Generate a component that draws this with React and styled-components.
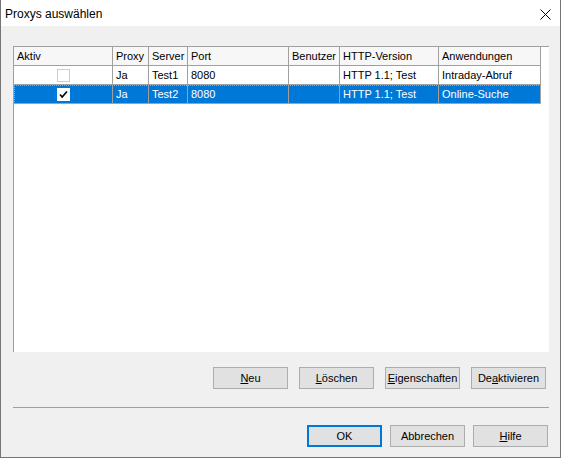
import React from "react";
import styled, { createGlobalStyle } from "styled-components";

const GlobalStyle = createGlobalStyle`
  html, body {
    margin: 0;
    padding: 0;
    background: #f0f0f0;
  }
  * {
    box-sizing: border-box;
  }
`;

const columns = [
  { key: "aktiv", label: "Aktiv", width: 99 },
  { key: "proxy", label: "Proxy", width: 36 },
  { key: "server", label: "Server", width: 39 },
  { key: "port", label: "Port", width: 101 },
  { key: "user", label: "Benutzer", width: 51 },
  { key: "http", label: "HTTP-Version", width: 99 },
  { key: "apps", label: "Anwendungen", width: 102 },
];

const rows = [
  { id: 1, aktiv: false, proxy: "Ja", server: "Test1", port: "8080", user: "", http: "HTTP 1.1; Test", apps: "Intraday-Abruf" },
  { id: 2, aktiv: true, proxy: "Ja", server: "Test2", port: "8080", user: "", http: "HTTP 1.1; Test", apps: "Online-Suche", selected: true },
];

const gridCols = columns.map((c) => `${c.width}px`).join(" ");

function App() {
  return (
    <>
      <GlobalStyle />
      <StWindow>
        <StTitleBar>
          <StTitle>Proxys auswählen</StTitle>
          <StClose>
            <svg width="11" height="11" viewBox="0 0 11 11">
              <path d="M0.5 0.5 L10.5 10.5 M10.5 0.5 L0.5 10.5" stroke="#000" strokeWidth="1" fill="none" />
            </svg>
          </StClose>
        </StTitleBar>

        <StBody>
          <StList>
            <StHeader>
              {columns.map((c) => (
                <StHeadCell key={c.key}>{c.label}</StHeadCell>
              ))}
            </StHeader>
            {rows.map((r) => (
              <StRow key={r.id} $selected={r.selected}>
                {columns.map((c) =>
                  c.key === "aktiv" ? (
                    <StCheckCell key={c.key}>
                      <StCheck $checked={r.aktiv}>
                        {r.aktiv && (
                          <svg width="9" height="9" viewBox="0 0 9 9">
                            <path d="M1 4.5 L3.2 7 L8 1.5" stroke="#000" strokeWidth="1.6" fill="none" />
                          </svg>
                        )}
                      </StCheck>
                    </StCheckCell>
                  ) : (
                    <StCell key={c.key}>{r[c.key]}</StCell>
                  )
                )}
              </StRow>
            ))}
          </StList>

          <StActionRow>
            <StButton><u>N</u>eu</StButton>
            <StButton><u>L</u>öschen</StButton>
            <StButton><u>E</u>igenschaften</StButton>
            <StButton>De<u>a</u>ktivieren</StButton>
          </StActionRow>

          <StSeparator />

          <StFooter>
            <StButton $default>OK</StButton>
            <StButton>Abbrechen</StButton>
            <StButton><u>H</u>ilfe</StButton>
          </StFooter>
        </StBody>
      </StWindow>
    </>
  );
}

export default App;

const StWindow = styled.div`
  width: 561px;
  height: 458px;
  display: flex;
  flex-direction: column;
  background: #f0f0f0;
  border: 1px solid #747474;
  border-top: none;
  font-family: "Liberation Sans", Arial, sans-serif;
  color: #000;
`;

const StTitleBar = styled.div`
  height: 26px;
  background: #fff;
  display: flex;
  align-items: center;
  justify-content: space-between;
  padding: 0 9px 0 4px;
`;

const StTitle = styled.div`
  font-size: 12px;
  padding-top: 1px;
`;

const StClose = styled.div`
  width: 11px;
  height: 11px;
  display: flex;
  margin-top: 2px;
`;

const StBody = styled.div`
  flex: 1;
  display: flex;
  flex-direction: column;
  padding: 20px 11px 0 12px;
`;

const StList = styled.div`
  height: 306px;
  background: #fff;
  border-top: 1px solid #a0a0a0;
  border-left: 1px solid #a0a0a0;
  font-size: 11px;
`;

const StHeader = styled.div`
  display: grid;
  grid-template-columns: ${gridCols};
  width: 527px;
  height: 19px;
  background: #f7f7f7;
  border-bottom: 1px solid #a0a0a0;
`;

const StHeadCell = styled.div`
  border-right: 1px solid #a0a0a0;
  padding-left: 3px;
  display: flex;
  align-items: center;
  white-space: nowrap;
  overflow: hidden;
`;

const StRow = styled.div`
  display: grid;
  grid-template-columns: ${gridCols};
  height: 19px;
  width: 527px;
  border-bottom: 1px solid #a0a0a0;
  background: ${(p) => (p.$selected ? "#0078d7" : "#fff")};
  color: ${(p) => (p.$selected ? "#fff" : "#000")};
  outline: ${(p) => (p.$selected ? "1px dotted #e8924a" : "none")};
  outline-offset: -1px;
`;

const StCell = styled.div`
  border-right: 1px solid #a0a0a0;
  padding-left: 3px;
  display: flex;
  align-items: center;
  white-space: nowrap;
  overflow: hidden;
`;

const StCheckCell = styled.div`
  border-right: 1px solid #a0a0a0;
  display: flex;
  align-items: center;
  justify-content: center;
`;

const StCheck = styled.div`
  width: 13px;
  height: 13px;
  background: #fff;
  border: 1px solid ${(p) => (p.$checked ? "#fff" : "#cccccc")};
  display: flex;
  align-items: center;
  justify-content: center;
`;

const StActionRow = styled.div`
  display: flex;
  justify-content: flex-end;
  gap: 11px;
  margin-top: 15px;
  padding-right: 3px;
`;

const StFooter = styled.div`
  display: flex;
  justify-content: flex-end;
  gap: 8px;
  margin-top: 17px;
  padding-right: 1px;
`;

const StSeparator = styled.div`
  height: 1px;
  background: #a0a0a0;
  margin-top: 18px;
`;

const StButton = styled.button`
  width: 75px;
  height: 22px;
  padding: 0;
  background: #e1e1e1;
  border: ${(p) => (p.$default ? "2px solid #0078d7" : "1px solid #adadad")};
  font-family: "Liberation Sans", Arial, sans-serif;
  font-size: 11px;
  color: #000;

  & > u {
    text-underline-offset: 1px;
  }
`;
